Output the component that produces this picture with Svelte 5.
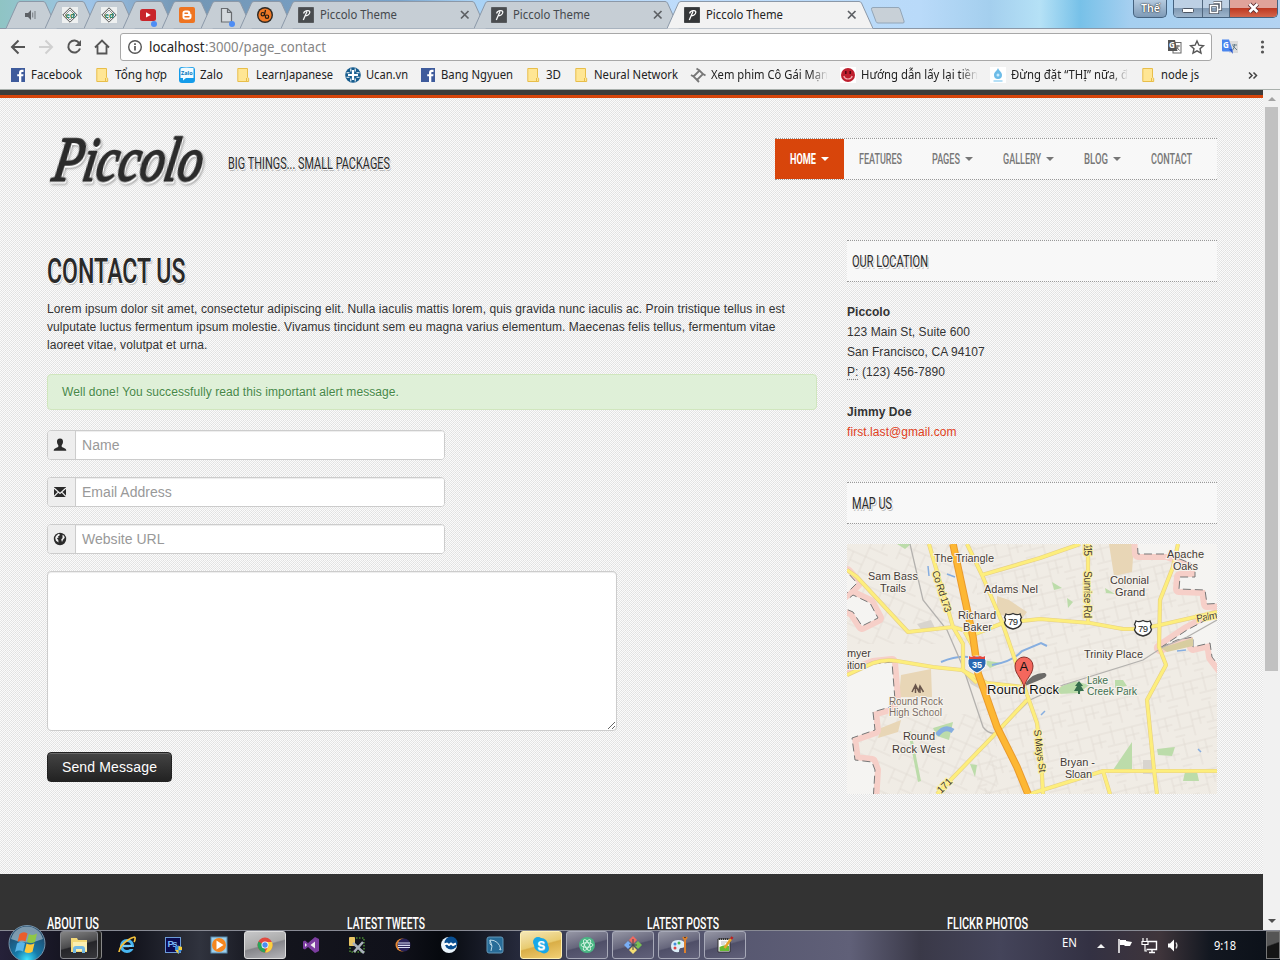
<script>
  const tabs = [
    { icon: 'sound', w: 51 },
    { icon: 'diamond', w: 51 },
    { icon: 'diamond', w: 51 },
    { icon: 'youtube', w: 51 },
    { icon: 'blogger', w: 51 },
    { icon: 'page', w: 51 },
    { icon: 'orange', w: 53 },
    { icon: 'piccolo', w: 205, title: 'Piccolo Theme' },
    { icon: 'piccolo', w: 205, title: 'Piccolo Theme' },
    { icon: 'piccolo', w: 206, title: 'Piccolo Theme', active: true }
  ];
  const bookmarks = [
    { icon: 'facebook', t: 'Facebook', w: 51, slot: 86 },
    { icon: 'folder', t: 'Tổng hợp', w: 52, slot: 83 },
    { icon: 'zalo', t: 'Zalo', w: 23, slot: 58 },
    { icon: 'folder', t: 'LearnJapanese', w: 77, slot: 108 },
    { icon: 'ucan', t: 'Ucan.vn', w: 42, slot: 75 },
    { icon: 'facebook', t: 'Bang Ngyuen', w: 72, slot: 107 },
    { icon: 'folder', t: '3D', w: 15, slot: 48 },
    { icon: 'folder', t: 'Neural Network', w: 84, slot: 115 },
    { icon: 'film', t: 'Xem phim Cô Gái Mạn', w: 117, slot: 150, fade: true },
    { icon: 'smile', t: 'Hướng dẫn lấy lại tiền', w: 117, slot: 150, fade: true },
    { icon: 'drop', t: 'Đừng đặt “THỊ” nữa, đ', w: 117, slot: 152, fade: true },
    { icon: 'folder', t: 'node js', w: 38, slot: 88 }
  ];
  const nav = [
    { t: 'HOME', w: 26, caret: true, active: true },
    { t: 'FEATURES', w: 43 },
    { t: 'PAGES', w: 28, caret: true },
    { t: 'GALLERY', w: 38, caret: true },
    { t: 'BLOG', w: 24, caret: true },
    { t: 'CONTACT', w: 41 }
  ];
  const fields = [
    { icon: 'user', p: 'Name' },
    { icon: 'mail', p: 'Email Address' },
    { icon: 'globe', p: 'Website URL' }
  ];
  const footer = [
    { t: 'ABOUT US', w: 52 },
    { t: 'LATEST TWEETS', w: 78 },
    { t: 'LATEST POSTS', w: 72 },
    { t: 'FLICKR PHOTOS', w: 81 }
  ];
  const apps = [
    { k: 'explorer', open: 'stack' }, { k: 'ie' }, { k: 'ps' }, { k: 'wmp' }, { k: 'chrome', open: 'front' },
    { k: 'vs' }, { k: 'tools' }, { k: 'eclipse' }, { k: 'moon' }, { k: 'mysql' },
    { k: 'skype', open: 'alert' }, { k: 'atom', open: 'yes' }, { k: 'git', open: 'yes' },
    { k: 'paint', open: 'yes' }, { k: 'note', open: 'yes' }
  ];
  const cityLimits = [
    'M-8 28L0 28 10 39 0 49-8 50z',
    'M-8 54L0 56 6 51 23 59 31 74 15 82 6 68-8 62z',
    'M-8 133L26 120 45 118 48 156 43 163 26 168 28 186 5 194 8 216 25 218 28 226 26 258-8 258z',
    'M290-8L291 10 320 10 348 21 348 33 333 33 332 45 358 46 360 60 378 59 378-8z',
    'M313 104L340 86 378 66 378 130 365 113 363 99 346 103 346 93 330 96z'
  ];
</script>

{#snippet fit(text, w, size, h, base)}
  <svg class="fit" width={w} height={h}><text x="0" y={base} font-size={size} textLength={w} lengthAdjust="spacingAndGlyphs">{text}</text></svg>
{/snippet}

{#snippet icon(k)}
  <svg class="ico" width="16" height="16" viewBox="0 0 16 16">
    {#if k === 'sound'}
      <path d="M2 6h3l3-3v10l-3-3H2z" fill="#5d6166" /><path d="M9.7 5.5v5M12 4v8" stroke="#7c8187" stroke-width="1.1" fill="none" />
    {:else if k === 'diamond'}
      <rect width="16" height="16" fill="#eef0f0" /><path d="M8 .8L15.2 8 8 15.2.8 8z" fill="none" stroke="#555" /><path d="M8 3l5 5-5 5-5-5z" fill="none" stroke="#777" stroke-width=".8" />
      <text x="3.6" y="10.5" font-size="7.5" font-weight="700" fill="#2c8059">ed</text>
    {:else if k === 'youtube'}
      <rect y="2" width="16" height="12" rx="2.5" fill="#c9252b" /><path d="M6 5.2v5.2L10.8 8z" fill="#fff" />
    {:else if k === 'blogger'}
      <rect width="16" height="16" rx="2" fill="#ee7421" /><path d="M6.2 3.5h2.6c1.6 0 2.5 1 2.5 2.4 0 1 .3 1.1 1.2 1.3v2.6c0 1.7-1 2.7-2.7 2.7H6.2c-1.7 0-2.7-1-2.7-2.7V6.2c0-1.7 1-2.7 2.7-2.7z" fill="#fff" /><path d="M6 6.2h2.5M6 9.8h4" stroke="#ee7421" stroke-width="1.4" stroke-linecap="round" />
    {:else if k === 'page'}
      <path d="M3.500 1.500h6l4 4v9.500h-10zM9.500 1.500v4h4" fill="#d5dade" stroke="#686c70" stroke-width="1.200" />
    {:else if k === 'orange'}
      <circle cx="8" cy="8" r="8" fill="#2c2722" /><circle cx="8" cy="8" r="6.600" fill="#ef7926" /><circle cx="5.800" cy="7.200" r="1.700" fill="none" stroke="#241b12" stroke-width="1.200" /><circle cx="10" cy="9.700" r="1.700" fill="none" stroke="#241b12" stroke-width="1.200" /><path d="M8.500 3L7.300 8.500" stroke="#241b12" stroke-width="1.200" />
    {:else if k === 'piccolo'}
      <rect width="16" height="16" rx="1.500" fill="#343638" /><rect width="16" height="16" rx="1.500" fill="none" stroke="#565a5d" />
      <path d="M5.300 13L9 4.500M5.700 6.500C6 3.500 12 2.500 11.800 5.300 11.600 7.500 9 8.800 6.800 8.700" fill="none" stroke="#fff" stroke-width="1.300" />
    {:else if k === 'facebook'}
      <rect x="1" y="1" width="14" height="14" fill="#3e5b9c" /><path d="M9 15V9.300H7.200V7.200H9V5.700c0-2 1.100-3 2.700-3H13.500v2.200h-1.200c-.8 0-1 .4-1 1v1.300h2.200l-.3 2.100h-1.900V15z" fill="#fff" />
    {:else if k === 'folder'}
      <path d="M.8 1.500h9.700v9l1.200.8v3.200H.8z" fill="#ffe694" stroke="#e8be4a" /><path d="M9.500 11v3.500" stroke="#e8be4a" />
    {:else if k === 'zalo'}
      <rect width="16" height="16" rx="3" fill="#149cea" /><path d="M1.500 1.500Q4 0 14.500 1v10H7l-3 2.500V11H1.500z" fill="#f1fbff" /><text x="2.100" y="8.300" font-size="5.500" font-weight="700" fill="#0878bd">Zalo</text>
    {:else if k === 'ucan'}
      <circle cx="8" cy="8" r="7.800" fill="#165c8e" /><path d="M8 3v10M3 8h10" stroke="#fff" stroke-width="2.200" /><path d="M5.800 1.500v3M10.200 1.500v3M5.800 14.500v-3M10.200 14.500v-3M1.500 5.800h3M1.500 10.200h3M14.500 5.800h-3M14.500 10.200h-3" fill="none" stroke="#fff" stroke-width="1.100" />
    {:else if k === 'film'}
      <path d="M3.500 9.500l6-6 3.500 3.500-6 6zM6.500 1.500l3 2M13 7l2.500 1.500M1 8l2.500 1.500M7 13l2 2" fill="none" stroke="#777" stroke-width="1.800" />
    {:else if k === 'smile'}
      <rect width="16" height="16" fill="#fff" /><circle cx="8" cy="8" r="7" fill="#be1e2d" /><path d="M5.800 4v3M10.200 4v3" stroke="#4d0910" stroke-width="1.500" /><path d="M3.800 9c1 4 7.400 4 8.400 0" stroke="#f0a9ad" stroke-width="1.200" fill="none" />
    {:else if k === 'drop'}
      <rect width="16" height="16" fill="#fff" /><path d="M8 1c1 3 4 4 4 7a4 4 0 01-8 0c0-3 3-4 4-7z" fill="#6dbce8" /><circle cx="8" cy="8" r="1.500" fill="#c9ecff" /><path d="M3.500 14h9" stroke="#b5dff6" stroke-width="2" />
    {:else if k === 'user'}
      <path d="M8 1.500c2.300 0 3.200 1.500 3 3.600-.1 1.500-.7 2.500-1.300 3.200v1.200c0 .6 1 .9 2.300 1.400 1.400.5 2.300 1.300 2.300 2.900H1.700c0-1.600.9-2.400 2.300-2.900 1.300-.5 2.300-.8 2.300-1.400V8.300C5.700 7.600 5.100 6.600 5 5.100 4.800 3 5.700 1.500 8 1.500z" fill="#2b2b2b" />
    {:else if k === 'mail'}
      <rect x="2" y="3" width="12" height="10" fill="#2b2b2b" /><path d="M2 4l6 5.500L14 4M2 12.500l4.200-4.300M14 12.500L9.800 8.200" fill="none" stroke="#eee" stroke-width="1.200" />
    {:else if k === 'globe'}
      <circle cx="8" cy="8" r="6.200" fill="#2b2b2b" /><path d="M4 5l2.500-2.200 1.500.6-.7 1.300-1.300.5.600 1.300-1.800.8L6.300 9l.2 2.500-2.500-1.800L3.200 7zM10.500 3.800l1.500 1 .8 2-1.800 2-1 2.200-.8-2.500 1.300-1.500z" fill="#eee" />
    {/if}
  </svg>
{/snippet}

<div class="screen">
  <header class="chrome">
    <div class="strip">
      <div class="tabs">
        {#each tabs as tab}
          <div class="tab" class:active={tab.active} class:wide={tab.title} style:width={tab.w + 'px'}>
            <svg class="shape" width={tab.w} height="29"><path d={`M0 28.500L11.500 3Q12.300 1.500 14 1.500H${tab.w - 14}Q${tab.w - 12.300} 1.500 ${tab.w - 11.500} 3L${tab.w} 28.500`} fill={tab.active ? '#f2f2f2' : '#c6ced5'} stroke="#8b98a8" /></svg>
            <span class="fav" class:dim={tab.title && !tab.active}>{@render icon(tab.icon)}
              {#if tab.icon === 'youtube' || tab.icon === 'page'}<i class="dot"></i>{/if}
            </span>
            {#if tab.title}
              <span class="ttl">{@render fit(tab.title, 77, 12, 16, 12)}</span>
              <svg class="x" width="10" height="10"><path d="M1 1l7.500 7.500M8.500 1L1 8.500" stroke="#5d6064" stroke-width="1.700" /></svg>
            {/if}
          </div>
        {/each}
      </div>
      <svg class="newtab" width="36" height="18"><path d="M3 .5h25q1.500 0 2 1.500l4 12q.6 2-1 2H8q-1.500 0-2-1.500L1.500 2.500Q1 .5 3 .5z" fill="#c8d0d7" stroke="#93a6b8" /></svg>
      <div class="user">{@render fit('Thế', 19, 11.5, 16, 12)}</div>
      <div class="winbtns">
        <span><svg width="28" height="17"><rect x="8.500" y="8.500" width="11" height="4" rx="1" fill="#fff" stroke="#4c5563" /></svg></span>
        <span><svg width="26" height="17"><path d="M10.500 2.500h7v7h-2M7.500 5.500h7v7h-7z" fill="none" stroke="#4c5563" stroke-width="3.200" /><path d="M10.500 2.500h7v7h-2M7.500 5.500h7v7h-7z" fill="none" stroke="#fff" stroke-width="1.500" /></svg></span>
        <span class="close"><svg width="47" height="17"><path d="M19.500 4l8 8M27.500 4l-8 8" stroke="#582c30" stroke-width="4.500" /><path d="M19.500 4l8 8M27.500 4l-8 8" stroke="#fff" stroke-width="2.700" /></svg></span>
      </div>
    </div>

    <div class="toolbar">
      <svg class="navicons" width="112" height="28">
        <g fill="none" stroke="#555" stroke-width="2">
          <path d="M25 14H12.500M18.500 7.500L12 14l6.500 6.500" />
          <path d="M39 14h12.500M45.500 7.500L52 14l-6.500 6.500" stroke="#d0d0d0" />
          <path d="M79.300 10.200A6 6 0 1 0 80 15.500" /><path d="M81 7v6h-6z" fill="#555" stroke="none" />
          <path d="M95 14.500L102 7.500l7 7M97.500 13v7.500h9V13" stroke-width="1.800" />
        </g>
      </svg>
      <div class="address">
        <svg class="info" width="16" height="16"><circle cx="8" cy="8" r="6.300" fill="none" stroke="#555" stroke-width="1.400" /><path d="M8 7v4.500M8 4.200v1.700" stroke="#555" stroke-width="1.700" /></svg>
        <span class="host">{@render fit('localhost', 55.5, 13.5, 20, 15)}</span><span class="path">{@render fit(':3000/page_contact', 121, 13.5, 20, 15)}</span>
        <svg class="right" width="40" height="18">
          <rect x="6" y="4.500" width="8" height="10.500" fill="#fff" stroke="#666" /><path d="M1 2h7l2.500 11H1z" fill="#555" /><text x="2" y="10" font-size="8" font-weight="700" fill="#fff">G</text><path d="M9 8h4M11 7v1c0 2-1 3-2 4M9.500 9l3 3.500" stroke="#666" fill="none" />
          <path d="M30 3l1.900 4.200 4.500.5-3.400 3 1 4.500-4-2.300-4 2.300 1-4.500-3.400-3 4.500-.5z" fill="none" stroke="#555" stroke-width="1.400" />
        </svg>
      </div>
      <svg class="ext" width="60" height="28">
        <rect x="11" y="8" width="9" height="12" fill="#dcdcdc" /><path d="M4 6.500h7l4 12H5q-1 0-1-1z" fill="#4a86ee" /><path d="M11 16l4 5-1-5z" fill="#2d57c8" /><text x="5" y="15" font-size="8" font-weight="700" fill="#fff">G</text><path d="M14 12h5M16.500 11v1c0 2-1 4-2 5M15 13l4 4" stroke="#68808d" fill="none" />
        <circle cx="44.500" cy="9" r="1.600" fill="#555" /><circle cx="44.500" cy="14" r="1.600" fill="#555" /><circle cx="44.500" cy="19" r="1.600" fill="#555" />
      </svg>
    </div>

    <div class="bookmarks">
      {#each bookmarks as b}
        <div class="bm" style:width={b.slot + 'px'}>
          {@render icon(b.icon)}
          <span class:fade={b.fade} class:near={b.icon === 'folder'}>{@render fit(b.t, b.w, 12, 18, 13)}</span>
        </div>
      {/each}
      <svg class="more" width="10" height="10"><path d="M1 1.500L4 4.500l-3 3M5.500 1.500l3 3-3 3" fill="none" stroke="#444" stroke-width="1.500" /></svg>
    </div>
  </header>

  <div class="view">
    <main class="page">
      <div class="topline"></div>
      <div class="head">
        <div class="brand">
          <svg class="logo" width="162" height="60"><text transform="translate(5 48.500) skewX(-10)" font-size="63" textLength="149" lengthAdjust="spacingAndGlyphs">Piccolo</text></svg>
          <div class="tag">{@render fit('BIG THINGS... SMALL PACKAGES', 162, 16.5, 24, 18)}</div>
        </div>
        <nav>
          {#each nav as n}
            <a class:on={n.active} href="#top">{@render fit(n.t, n.w, 14, 20, 15)}{#if n.caret}<i class="caret"></i>{/if}</a>
          {/each}
        </nav>
      </div>

      <div class="cols">
        <section class="main">
          <h1>{@render fit('CONTACT US', 138.5, 34.3, 40, 33)}</h1>
          <p>Lorem ipsum dolor sit amet, consectetur adipiscing elit. Nulla iaculis mattis lorem, quis gravida nunc iaculis ac. Proin tristique tellus in est<br /><span class="tight">vulputate luctus fermentum ipsum molestie. Vivamus tincidunt sem eu magna varius elementum. Maecenas felis tellus, fermentum vitae</span><br /><span class="tight">laoreet vitae, volutpat et urna.</span></p>
          <div class="alert">Well done! You successfully read this important alert message.</div>
          {#each fields as f}
            <label class="field"><span>{@render icon(f.icon)}</span><input type="text" placeholder={f.p} /></label>
          {/each}
          <textarea></textarea>
          <button>Send Message</button>
        </section>

        <aside>
          <h5>{@render fit('OUR LOCATION', 76, 16.3, 24, 18)}</h5>
          <address><b>Piccolo</b><br />123 Main St, Suite 600<br />San Francisco, CA 94107<br /><abbr>P:</abbr> (123) 456-7890</address>
          <address class="second"><b>Jimmy Doe</b><br /><a href="#mail">first.last@gmail.com</a></address>
          <h5>{@render fit('MAP US', 40, 16.3, 24, 18)}</h5>
          <svg class="map" width="370" height="250" viewBox="0 0 370 250">
            <defs>
              <pattern id="streets" width="34" height="30" patternUnits="userSpaceOnUse" patternTransform="rotate(-14)"><path d="M0 6h34M7 0v19M20 6v24M0 20h20M28 6v14M20 14h14M0 27h10" fill="none" stroke="#e1dbd3" stroke-width=".8" /></pattern>
              <pattern id="streets2" width="42" height="26" patternUnits="userSpaceOnUse" patternTransform="rotate(24)"><path d="M0 4h42M9 4v16M22 0v26M9 13h13M34 4v14M22 20h20" fill="none" stroke="#e1dbd3" stroke-width=".8" /></pattern>
            </defs>
            <rect width="370" height="250" fill="#f0ece5" />
            <rect x="130" width="240" height="250" fill="url(#streets)" />
            <rect width="130" height="100" fill="url(#streets2)" /><rect y="170" width="150" height="80" fill="url(#streets2)" />
            <g fill="#e8d6b6"><path d="M54 131l30-6 1 28H52zM150 52l12 4 18 12-6 8-24-6zM262 0h25l-2 28-18 4zM34 184l20-8-3 12-20 6z" /></g>
            {#each cityLimits as d}<path {d} fill="#f5f4f2" stroke="#f6cfc8" stroke-width="12" stroke-linejoin="round" />{/each}
            {#each cityLimits as d}<path {d} fill="#f5f4f2" stroke="#777" stroke-dasharray="8 4" />{/each}
            <path d="M314 104l32-10v8l-26 6z" fill="#d8cda0" />
            <g fill="#bcdcaa"><path d="M50 0h14l-6 5zM61 187h3l10 50-3 1zM86 184l20-6-4 18-12-4zM123 220l7 1-2 12zM135 116l20 3-12 5zM266 226l19-28v30zM310 205l18-2-3 9-14-1zM338 228l12 0 2 9-16 0zM210 144l18-7 14 4-10 8-20 1zM268 136l8 0 4 6-12 2zM205 38l10 6-8 2zM258 44l10 6-9-1zM220 54l6 4-5 6z" /></g>
            <g fill="none" stroke="#86aee0" stroke-width="2"><path d="M94 118q15-6 27-5M145 121q20-3 30-14l19-8 6 3" /><path d="M100 30l8 3M81 22l1 10M194 171l4-4M330 107l9-1M351 205l3 3" stroke-width="1.500" /><path d="M90 191q8-10 16-4" stroke-width="5" /></g>
            <path d="M118 130l14 4 12 8-6 6-14-8zM70 80l14-4 4 8-12 4zM296 216h9v14h-9z" fill="#d8d4ce" />
            <path d="M63 0L76 56 100 86 116 123 136 183Q143 192 150 188L183 156 216 141 296 116 316 103 340 93 370 76" fill="none" stroke="#b3b1ae" stroke-width="1.300" />
            {#each [['#e6cf86', 4.2], ['#fdee7c', 3]] as [c, w]}
              <g fill="none" stroke={c} stroke-width={w} stroke-linejoin="round">
                <path d="M82 0L106 83 116 100V126L130 139M0 26L10 33 61 88 106 83 116 86 128 90 156 79 193 75 243 79 276 85H293L313 81 370 68" />
                <path d="M120 0L135 31 155 78 176 139 190 179 194 213 196 250M135 31L193 14 233 0M0 131L26 119Q38 115 50 117L86 123 115 126 140 139 176 143M180 156L150 188 90 250M241 0V79" />
                <path d="M331 0L326 23 313 56 312 103 319 121 300 156 307 226 310 250M370 227H256L183 250M256 227L263 250M118 88L130 110" />
              </g>
            {/each}
            <path d="M106 0L126 93 131 129 150 183 170 223 181 250" fill="none" stroke="#e99a2d" stroke-width="7.500" /><path d="M106 0L126 93 131 129 150 183 170 223 181 250" fill="none" stroke="#fdb733" stroke-width="5.500" />
            <path d="M178 140q8-12 20-11 4 3-3 6t-17 7z" fill="#333" opacity=".7" />
            <g class="lbl" font-size="11">
              <text x="87" y="18" textLength="60">The Triangle</text><text x="21" y="36" textLength="50">Sam Bass</text><text x="33" y="48" textLength="26">Trails</text>
              <text x="137" y="49" textLength="54">Adams Nel</text><text x="111" y="75" textLength="38">Richard</text><text x="116" y="87" textLength="29">Baker</text>
              <text x="0" y="113" textLength="24">myer</text><text x="0" y="125" textLength="19">ition</text>
              <text x="56" y="196" textLength="32">Round</text><text x="45" y="209" textLength="53">Rock West</text>
              <text x="320" y="14" textLength="37">Apache</text><text x="326" y="26" textLength="25">Oaks</text><text x="263" y="40" textLength="39">Colonial</text><text x="268" y="52" textLength="30">Grand</text>
              <text x="237" y="114" textLength="59">Trinity Place</text><text x="213" y="222" textLength="35">Bryan -</text><text x="218" y="234" textLength="27">Sloan</text>
              <g fill="#7a6b62" font-size="10"><text x="42" y="161" textLength="54">Round Rock</text><text x="42" y="172" textLength="53">High School</text></g>
              <g fill="#3f7150" font-size="10.5"><text x="240" y="140" textLength="21">Lake</text><text x="240" y="151" textLength="50">Creek Park</text></g>
              <text x="140" y="150" font-size="13" fill="#111" textLength="72">Round Rock</text>
              <g class="road" font-size="10"><text transform="translate(85 28) rotate(72)" textLength="43">Co Rd 173</text><text transform="translate(237 0) rotate(90)" textLength="12">115</text><text transform="translate(237 27) rotate(90)" textLength="47">Sunrise Rd</text><text transform="translate(187 186) rotate(83)" textLength="43">S Mays St</text><text transform="translate(94 250) rotate(-45)" textLength="17">171</text><text transform="translate(350 78) rotate(-10)" textLength="21">Palm</text></g>
            </g>
            {#each [[166, 77], [296, 84]] as [x, y]}
              <path d={`M${x - 7} ${y - 7}q3 1.500 7-.5 4 2 7 .5l1.500 3.500q-2 2 0 5-1 5-8.500 6.500-7.500-1.500-8.500-6.500 2-3 0-5z`} fill="#fff" stroke="#333" stroke-width="1.300" /><text x={x - 5} y={y + 4} font-size="9.500" textLength="10" fill="#222">79</text>
            {/each}
            <path d="M122 113q8-2 16 0 3 8-2 12-3 3-6 4-3-1-6-4-5-4-2-12z" fill="#2867b2" stroke="#fff" /><path d="M122 112l2 1 3-1 3 1 3-1 3 1 2-1v3h-16z" fill="#e4463c" /><text x="125" y="124" font-size="9" font-weight="700" fill="#fff">35</text>
            <path d="M65 148l3.500-7 3 6 1.500-5 3.500 6M68.500 142v7M73 142v7" stroke="#69564b" stroke-width="1.500" fill="none" /><path d="M232 137l4 5h-2l3 5h-4v3h-2v-3h-4l3-5h-2z" fill="#366e4d" />
            <path d="M177 144c-1-9-9-13-9-22a9 9 0 0118 0c0 9-8 13-9 22z" fill="#f4675d" stroke="#8c322c" /><text x="172.500" y="127" font-size="13" fill="#111">A</text>
          </svg>
        </aside>
      </div>

      <footer>
        {#each footer as f}<div>{@render fit(f.t, f.w, 16, 20, 18)}</div>{/each}
      </footer>
    </main>
    <div class="scroll"><i class="up"></i><div class="thumb"></div><i class="down"></i></div>
  </div>

  <div class="taskbar">
    <svg class="orb" width="40" height="36" viewBox="0 0 40 36">
      <defs><radialGradient id="orbfill" cx=".5" cy=".95" r=".8"><stop offset="0" stop-color="#3fe4ff" /><stop offset=".4" stop-color="#167bab" /><stop offset="1" stop-color="#204a6c" /></radialGradient></defs>
      <circle cx="20" cy="18.500" r="18" fill="url(#orbfill)" stroke="#7794aa" /><path d="M4 14a16.500 16.500 0 0132 0q-16 7-32 0z" fill="#c9d8e2" opacity=".55" />
      <path d="M12.500 9q4-3 8-.5l-2 8q-4-2-8 .5z" fill="#ea5d2b" /><path d="M22 9q4 2 8-.5l-2 8.500q-4 2-8 0z" fill="#8fc746" /><path d="M10 18.500q4-2.500 8-.5l-2 8.500q-4-2-8 .5z" fill="#59b5e8" /><path d="M19.500 18.500q4 2 8-.3l-2 8.500q-4 2.300-8 .3z" fill="#fcc93c" />
    </svg>
    <div class="apps">
      {#each apps as a}
        <div class={'app ' + (a.open ?? '')}>
          <svg width="18" height="18" viewBox="0 0 18 18">
            {#if a.k === 'explorer'}<path d="M1 2h6l1 2h9v12H1z" fill="#f4d978" /><path d="M3 6h14v9H3z" fill="#fbeeb0" /><path d="M3 17v-4q0-3 3-3h6q3 0 3 3v4h-3v-4H6v4z" fill="#72b9e4" />
            {:else if a.k === 'ie'}<circle cx="9" cy="10" r="5.500" fill="none" stroke="#48b6f1" stroke-width="3.200" /><path d="M5 10h9" stroke="#79cdf8" stroke-width="2.400" /><path d="M11 12h6" stroke="#10131c" stroke-width="2" /><path d="M1 16Q2 9 10 4t7-1q0 2-1 3" fill="none" stroke="#f4c13b" stroke-width="1.700" />
            {:else if a.k === 'ps'}<rect x="1.500" y="1.500" width="15" height="15" fill="#0b0c51" stroke="#6c9bd8" /><text x="3.500" y="11" font-size="9.500" textLength="10" fill="#7bb7f6" font-weight="700">Ps</text><path d="M11 11l3.500-1.500L18 11v3l-3.500 4-3.500-4z" fill="#348be0" /><path d="M14.500 10v4H18v-3zM11 14h3.500v4z" fill="#f5cc39" />
            {:else if a.k === 'wmp'}<rect x="1" y="1" width="16" height="16" fill="#9cd0ed" stroke="#5a8bae" /><circle cx="9" cy="9" r="7" fill="#f4861f" /><path d="M6.500 4.500v9L13.500 9z" fill="#fff" />
            {:else if a.k === 'chrome'}<circle cx="9" cy="9" r="7.500" fill="#e04a3f" /><path d="M2.500 5.500L8 9l1.500 7.500A7.500 7.500 0 012.500 5.500z" fill="#29a35a" /><path d="M16 6a7.500 7.500 0 01-7 10.500L12.500 10 10 6z" fill="#fcd03f" /><circle cx="9" cy="9" r="3.500" fill="#fff" /><circle cx="9" cy="9" r="2.700" fill="#4b8df2" />
            {:else if a.k === 'vs'}<path d="M13 1l4 2v12l-4 2-7-6-3 2.500-2-1v-7l2-1L6 7z" fill="#7c3da0" /><path d="M13 5.500v7L8.500 9zM3 7l2 2-2 2z" fill="#eee" />
            {:else if a.k === 'tools'}<path d="M5 2h11v14H2V9" fill="none" stroke="#68ca3e" stroke-dasharray="1.500 1.500" /><rect x="1" y="1" width="6" height="9" rx="1" fill="#e9c463" /><path d="M5 7l11 10M15 6L6 16" stroke="#aab1bb" stroke-width="2.500" />
            {:else if a.k === 'eclipse'}<circle cx="8" cy="9" r="6.500" fill="#e88a34" /><circle cx="10" cy="9" r="6.500" fill="#292358" /><path d="M4 7h12M4 9.300h12M4 11.500h12" stroke="#d8dcf2" stroke-width="1.200" />
            {:else if a.k === 'moon'}<circle cx="9" cy="9" r="8" fill="#eaf5fc" /><circle cx="11" cy="7" r="6.500" fill="#084e91" /><path d="M4 8.500l3-1 2 1.500 2-1.500 2 1.500 3-1.500" stroke="#fff" stroke-width="2" fill="none" />
            {:else if a.k === 'mysql'}<rect x="1" y="1" width="16" height="16" rx="2" fill="#286c98" stroke="#6297b8" /><path d="M5 15l1-5-2-6q9 0 11 10l-2-1M4 4q-1 5 2 6" fill="none" stroke="#b8d5e4" />
            {:else if a.k === 'skype'}<circle cx="6" cy="6" r="5" fill="#18a8e7" /><circle cx="12" cy="12.500" r="5" fill="#18a8e7" /><circle cx="9" cy="9" r="7" fill="#18a8e7" /><text x="5.200" y="13.500" font-size="12" font-weight="700" fill="#fff">S</text>
            {:else if a.k === 'atom'}<circle cx="9" cy="9" r="8" fill="#49b784" /><g fill="none" stroke="#d7f5e4" stroke-width=".9"><ellipse cx="9" cy="9" rx="6" ry="2.300" /><ellipse cx="9" cy="9" rx="6" ry="2.300" transform="rotate(60 9 9)" /><ellipse cx="9" cy="9" rx="6" ry="2.300" transform="rotate(120 9 9)" /></g>
            {:else if a.k === 'git'}<path d="M9 0l4 4-4 4-4-4z" fill="#f16b61" /><path d="M4 5l4 4-4 4-4-4z" fill="#79aef5" /><path d="M14 5l4 4-4 4-4-4z" fill="#79bf54" /><path d="M9 10l4 4-4 4-4-4z" fill="#f6df72" /><path d="M9 3v11M5 9h8" stroke="#3d4553" />
            {:else if a.k === 'paint'}<path d="M1 10q0-6 7-6t7 5q0 3-4 3-2 0-2 4-8 1-8-6z" fill="#dceef8" /><circle cx="5" cy="8" r="1.500" fill="#438bdd" /><circle cx="9" cy="7" r="1.500" fill="#43b757" /><circle cx="5" cy="12" r="1.500" fill="#dc4444" /><path d="M15 3v14M13 1l2 3 2-3" stroke="#dc812d" stroke-width="2" />
            {:else}<path d="M2 3h12v13H2z" fill="#fff" stroke="#333" /><path d="M3.500 11q5-3 9.500-1v5H3.500z" fill="#67bb34" /><path d="M3 3h10" stroke="#333" stroke-width="2" stroke-dasharray="1 1" /><path d="M5 6h6M5 8h4" stroke="#bbb" /><path d="M8.500 12L15 3" stroke="#e7a42c" stroke-width="2.500" /><path d="M15 3l1.500-2" stroke="#b22" stroke-width="2.500" />{/if}
          </svg>
        </div>
      {/each}
    </div>
    <div class="tray">
      <span class="lang">{@render fit('EN', 15, 12, 18, 12)}</span>
      <svg width="90" height="20"><path d="M7 13l4-4 4 4z" fill="#f4f4f4" />
        <path d="M29 4v14" stroke="#fff" stroke-width="1.500" /><path d="M30 5h6v1l6 1-2 4h-5l-1-1h-4z" fill="#fff" />
        <path d="M57.500 6.500h9v8h-10M59 17.500h6M62 15v3" stroke="#fff" stroke-width="1.400" fill="none" /><path d="M53 3v4M57 3v4M52 6.500h6v3h-6zM55 9v7h2" stroke="#fff" fill="none" stroke-width="1.200" />
        <path d="M78 8.500h2l4-4v12l-4-4h-2z" fill="#fff" /><path d="M86 7.500q2 3 0 6" stroke="#ddd" stroke-width="1.200" fill="none" /></svg>
      <span class="clock">{@render fit('9:18', 22, 12.3, 18, 13)}</span>
    </div>
    <div class="desk"></div>
  </div>
</div>

<style>
  :global(body) { overflow: hidden; }
  .screen { width: 1280px; height: 960px; display: flex; flex-direction: column; overflow: hidden; font-family: 'Liberation Sans', Arial, sans-serif; font-size: 12px; color: #333; }
  svg { display: block; flex: none; }
  .fit { overflow: visible; }
  .fit text { fill: currentColor; }
  .chrome { height: 90px; flex: none; box-sizing: border-box; border-bottom: 1px solid #a9b0ac; background: #f2f2f2; font-family: 'Noto Sans', sans-serif; }
  .strip { height: 29px; display: flex; background: linear-gradient(90deg, #8fc4c4 0, #9ec4e8 90px, #7396b4 180px, #78a3cb 400px, #a8d2f5 470px, #bedcfb 680px, #b9daf9 920px, #a4cfee 990px, #b5e1f6 1040px, #77c1e8 1080px, #a5cff0 1130px, #b3d3f2 1280px); box-shadow: inset 0 -1px #8b98a8; }
  .tabs { display: flex; padding-left: 6px; }
  .tab { position: relative; height: 29px; flex: none; display: flex; align-items: center; box-sizing: border-box; padding: 1px 0 0 17px; margin-right: -12px; }
  .tab.wide { padding-left: 13px; }
  .shape { position: absolute; left: 0; top: 0; }
  .tab.active { z-index: 2; }
  .fav { position: relative; }
  .tab.wide .fav { margin-left: 4px; }
  .dim { opacity: .85; }
  .dot { position: absolute; right: -1px; bottom: -4px; width: 6px; height: 6px; border-radius: 50%; background: #4d8df5; }
  .ttl { position: relative; margin-left: 6px; color: #45494d; }
  .active .ttl { color: #222; }
  .x { position: relative; margin-left: auto; margin-right: 16px; }
  .newtab { margin: 7px 0 0 9px; }
  .user { margin-left: auto; margin-right: 6px; width: 34px; height: 18px; box-sizing: border-box; border: 1px solid #45627f; border-top: 0; border-radius: 0 0 5px 5px; background: linear-gradient(#b5cbe0, #7e9ab6); padding-left: 7px; color: #fff; text-shadow: 0 0 2px #222, 0 0 1px #222; font-weight: 600; }
  .winbtns { display: flex; height: 18px; box-sizing: border-box; width: 105px; margin-right: 2px; border: 1px solid #45627f; border-top: 0; border-radius: 0 0 5px 5px; overflow: hidden; }
  .winbtns span { background: linear-gradient(#bdd0e4 45%, #819ab4 50%, #9db4cb); border-right: 1px solid #51677e; }
  .winbtns .close { border: 0; background: linear-gradient(#e0a39a 45%, #be3a23 50%, #d4664c); }
  .toolbar { height: 36px; display: flex; align-items: center; }
  .navicons { margin-right: 8px; }
  .address { width: 1092px; height: 28px; box-sizing: border-box; border: 1px solid #a8a8a8; border-radius: 3px; background: #fff; display: flex; align-items: center; padding-left: 6px; }
  .info { margin-right: 6px; }
  .host { color: #222; }
  .path { color: #858585; }
  .right { margin-left: auto; margin-right: 4px; }
  .ext { margin-left: 6px; }
  .bookmarks { height: 24px; display: flex; padding-left: 10px; position: relative; align-items: flex-start; }
  .bm { flex: none; display: flex; gap: 5px; height: 21px; padding-top: 2px; color: #222; }
  .bm > span { margin-top: -1px; }
  .bm .near { margin-left: -2px; }
  .fade { width: 117px; mask-image: linear-gradient(90deg, #000 85%, transparent); }
  .more { margin: 6px 0 0 18px; }
  .view { height: 841px; flex: none; margin-bottom: -1px; display: flex; }
  .page {
    width: 1263px; flex: none; display: flex; flex-direction: column; background-color: #fbfbfb;
    background-image:
      conic-gradient(at 1px 1px, transparent 75%, #dfdfdf 0), conic-gradient(at 1px 1px, transparent 75%, #dfdfdf 0),
      conic-gradient(#e6e6e6 25%, transparent 0 50%, #e6e6e6 0 75%, transparent 0);
    background-size: 4px 4px, 4px 4px, 2px 2px;
    background-position: 1px 0, 3px 2px, 0 0;
  }
  .topline { height: 5px; flex: none; background: #3d3d3b; border-bottom: 3px solid #d8450b; }
  .head { height: 142px; flex: none; box-sizing: border-box; padding: 34px 46px 0 47px; display: flex; justify-content: space-between; }
  .brand { display: flex; }
  .logo { overflow: visible; margin-left: -1px; }
  .logo text { font-family: 'Liberation Serif', serif; font-weight: 400; font-style: italic; fill: #2c2c2c; stroke: #2c2c2c; stroke-width: 2.4px; stroke-linejoin: round; filter: drop-shadow(1px 2px 0 #fff) drop-shadow(1px 1px 1px #999); }
  .tag { margin: 19px 0 0 20px; }
  .tag, h1, h5, nav, footer { font-family: Roboto, sans-serif; font-weight: 500; }
  .tag, h1, h5 { color: #292929; text-shadow: 1px 1px #fff, 2px 2px #bbb; }
  .tag, h5 { font-weight: 400; }
  nav { margin-top: 6px; height: 42px; box-sizing: border-box; display: flex; padding-right: 10px; border: dotted #999; border-width: 1px 0; background: #f8f8f8; }
  nav a { display: flex; align-items: center; padding: 0 15px; color: #777; text-decoration: none; }
  nav a.on { background: #d8450b; color: #fff; font-weight: 700; }
  .caret { margin-left: 5px; border: 4px solid transparent; border-top-color: currentColor; border-bottom: 0; }
  .cols { display: grid; grid-template-columns: 770px 370px; gap: 30px; padding-left: 47px; height: 634px; flex: none; }
  h1 { margin: 10px 0 10px; height: 40px; }
  p { margin: 0; line-height: 18px; white-space: nowrap; letter-spacing: .09px; }
  .tight { letter-spacing: .07px; }
  .main { display: flex; flex-direction: column; align-items: flex-start; }
  .alert { margin: 20px 0; box-sizing: border-box; height: 36px; width: 770px; border: 1px solid #d0e6be; border-radius: 4px; background: #dff0d8; color: #468847; padding: 0 14px; line-height: 34px; text-shadow: 0 1px rgba(255,255,255,.5); letter-spacing: .07px; }
  .field { display: flex; height: 30px; width: 398px; box-sizing: border-box; border: 1px solid #ccc; border-radius: 4px; overflow: hidden; margin-bottom: 17px; background: #fff; flex: none; }
  .field span { width: 28px; box-sizing: border-box; padding: 6px 0 0 4px; background: #eee; border-right: 1px solid #ccc; }
  .field input { flex: 1; border: 0; outline: 0; padding: 0 6px; font: 14px 'Liberation Sans', sans-serif; box-shadow: inset 0 1px 1px rgba(0,0,0,.075); letter-spacing: .03px; }
  .field input::placeholder { color: #999; }
  textarea { width: 570px; height: 160px; box-sizing: border-box; margin: 0; border: 1px solid #ccc; border-radius: 4px; background: #fff; box-shadow: inset 0 1px 1px rgba(0,0,0,.075); }
  button { margin-top: 21px; width: 125px; height: 30px; padding: 0; border: 1px solid #222; border-radius: 4px; background: linear-gradient(#444, #222); box-shadow: inset 0 1px rgba(255,255,255,.2); color: #fff; font: 14px 'Liberation Sans', sans-serif; white-space: nowrap; letter-spacing: .15px; }
  aside { display: flex; flex-direction: column; }
  h5 { margin: 0; height: 42px; flex: none; box-sizing: border-box; border: dotted #999; border-width: 1px 0; background: #f8f8f8; padding: 8px 0 0 5px; }
  address { font-style: normal; line-height: 20px; margin: 20px 0; letter-spacing: .07px; }
  address.second { margin: 0 0 40px; }
  address a { color: #e0401c; text-decoration: none; }
  abbr { border-bottom: 1px dotted #888; }
  .map { margin-top: 20px; overflow: hidden; }
  .lbl text { paint-order: stroke; stroke: #f6f3ed; stroke-width: 2px; }
  .lbl .road text { stroke: #fdf09a; }
  .lbl { fill: #443a36; }
  footer { flex: 1; background: #333; color: #fff; display: grid; grid-template-columns: repeat(4, 300px); padding: 37px 0 0 47px; box-sizing: border-box; }
  .scroll { width: 17px; background: #f1f1f1; display: flex; flex-direction: column; align-items: center; }
  .up { border: 4px solid transparent; border-bottom-color: #a3a3a3; border-top: 0; margin: 7px 0 6px; }
  .thumb { width: 13px; height: 564px; background: #c1c1c1; }
  .down { border: 4px solid transparent; border-top-color: #505050; border-bottom: 0; margin-top: auto; margin-bottom: 8px; }
  .taskbar { position: relative; height: 30px; flex: none; box-sizing: border-box; border-top: 1px solid #888a94; display: flex; background: linear-gradient(90deg, #252139 0, #14141f 70px, #12131c 130px, #30333e 200px, #14151d 260px, #10111a 400px, #06090e 440px, #262a3c 520px, #4d4e68 600px, #606078 850px, #3a3948 920px, #44445a 1000px, #333143 1090px, #3f353b 1160px, #121720 1210px, #0b1018 1280px); }
  .orb { margin: -6px 0 0 7px; position: relative; }
  .apps { display: flex; margin-left: 11px; }
  .app { width: 42px; height: 28px; margin: 0 2px; box-sizing: border-box; display: flex; align-items: center; justify-content: center; }
  .app.yes, .app.stack, .app.front, .app.alert { border: 1px solid #a7a9b8; border-radius: 3px; background: linear-gradient(165deg, #9697a5, #66667c 48%, #4f4f68 52%, #61617a); }
  .app.stack { width: 38px; margin-right: 6px; border-color: #85868b; background: linear-gradient(165deg, #858585, #4b4b4d 48%, #252529 52%, #38383c); box-shadow: 3px 0 #222, 4px 0 #888; }
  .app.front { border-color: #ddd; background: linear-gradient(165deg, #c7c7c9, #aaa 48%, #85858a 52%, #b5b5b9); }
  .app.alert { margin: 0 2px; width: 42px; line-height: 1; letter-spacing: 0; border-color: #fff0b0; background: linear-gradient(165deg, #f4e6b7, #e8cb70 48%, #d9ae47 52%, #f1cf74); }
  .tray { margin-left: auto; display: flex; color: #fff; font-family: 'Noto Sans', sans-serif; }
  .tray > svg { margin: 4px 0 0 13px; }
  .lang { margin-top: 4px; }
  .clock { margin: 6px 30px 0 34px; }
  .desk { width: 14px; box-sizing: border-box; height: 28px; border: 1px solid #777; background: linear-gradient(160deg, #555 45%, #151515 50%); }
</style>
